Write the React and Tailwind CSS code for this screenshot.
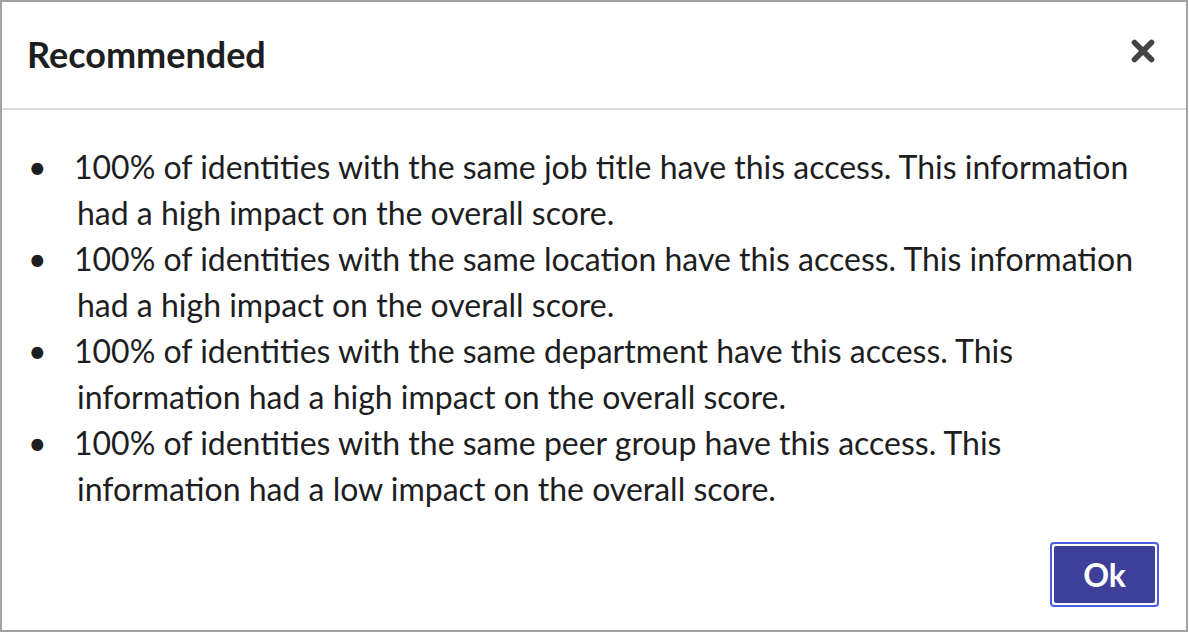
import { X } from 'lucide-react';

const LINES = [
  ['100% of identities with the same job title have this access. This information', 'had a high impact on the overall score.'],
  ['100% of identities with the same location have this access. This information', 'had a high impact on the overall score.'],
  ['100% of identities with the same department have this access. This', 'information had a high impact on the overall score.'],
  ['100% of identities with the same peer group have this access. This', 'information had a low impact on the overall score.'],
];

export default function App() {
  return (
    <div
      className="w-[1189px] h-[633px] bg-white"
      style={{ fontFamily: 'Lato, "Noto Sans", sans-serif' }}
    >
      <div className="flex flex-col w-[1188px] h-[632px] border-2 border-[#a3a3a3] bg-white text-[#1d1e22]">
        {/* Header */}
        <div className="flex items-center justify-between h-[108px] pl-[25px] pr-[26px] border-b-2 border-[#dcdce0]">
          <h2 className="text-[36px] font-bold leading-none -mt-[3px]">Recommended</h2>
          <button className="text-[#444444] -mt-[8px]">
            <X className="w-[34px] h-[34px]" strokeWidth={4} />
          </button>
        </div>

        {/* Body */}
        <ul className="pt-[34px] pl-[24px] pr-[20px]">
          {LINES.map((l, i) => (
            <li key={i} className="flex text-[32px] leading-[46px]">
              <span className="w-[48px] shrink-0 pl-[2px]">•</span>
              <span className="pl-[3px] -indent-[3px]">
                {l[0]}
                <br />
                {l[1]}
              </span>
            </li>
          ))}
        </ul>

        {/* Footer */}
        <div className="mt-auto flex justify-end pr-[27px] pb-[23px]">
          <button className="w-[109px] h-[65px] rounded-[4px] border-2 border-[#4b5ce0] p-[2px]">
            <span className="flex items-center justify-center w-full h-full rounded-[2px] bg-[#3d3f99] text-white text-[32px] font-bold">
              Ok
            </span>
          </button>
        </div>
      </div>
    </div>
  );
}
